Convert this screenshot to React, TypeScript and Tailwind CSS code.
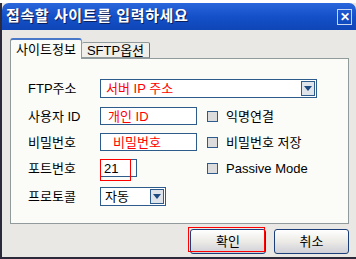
import React from 'react';

const font = { fontFamily: '"Liberation Sans", "Noto Sans CJK KR", sans-serif' };

function DropButton() {
  return (
    <div className="flex h-[15px] w-[14px] items-center justify-center border border-[#2d5c8c] bg-[#dfe3ea]">
      <svg width="8" height="6" viewBox="0 0 8 6">
        <path d="M0 0 H8 L4 5 Z" fill="#1d4a80" />
      </svg>
    </div>
  );
}

function Check({ label }: { label: string }) {
  return (
    <div className="flex items-center gap-[8px]">
      <div className="h-[11px] w-[11px] border border-[#2d5c8c] bg-[#dcdcdc]" />
      <span className="text-[13px] leading-none text-black">{label}</span>
    </div>
  );
}

function Row({ label, children, className }: { label: string; children: React.ReactNode; className: string }) {
  return (
    <div className={`flex items-center ${className}`}>
      <span className="w-[72px] text-[13px] leading-none text-black">{label}</span>
      {children}
    </div>
  );
}

export default function App() {
  return (
    <div className="h-[259px] w-[356px] overflow-hidden bg-white pt-[3px]" style={font}>
      <div className="flex h-[256px] flex-col border-b-2 border-l-2 border-[#2a2a3a] bg-[#e9e8e4]">
        {/* Title bar */}
        <div className="flex h-[27px] items-center justify-between rounded-t-[7px] bg-gradient-to-b from-[#2a66dc] via-[#1450c8] to-[#0f46b8] pl-[4px] pr-[4px]">
          <span className="text-[15px] font-bold tracking-[0.6px] text-white [text-shadow:1px_1px_0_#0a1f5c]">
            접속할 사이트를 입력하세요
          </span>
          <div className="flex h-[16px] w-[15px] items-center justify-center border border-[#c9d6f0] text-[12px] font-bold leading-none text-white">
            ✕
          </div>
        </div>

        <div className="flex flex-1 flex-col pl-[8px] pr-[7px] pt-[8px]">
          {/* Tabs */}
          <div className="flex h-[20px] items-end">
            <div className="z-10 -mb-px flex h-[21px] w-[72px] items-center justify-center rounded-t-[3px] border border-b-0 border-t-2 border-[#919b9c] border-t-[#4a78c8] bg-[#fbfbf8] text-[13px] leading-none text-black">
              사이트정보
            </div>
            <div className="flex h-[16px] w-[68px] items-center justify-center rounded-t-[2px] border border-l-0 border-[#919b9c] border-r-[#6a6a9a] bg-[#f0efe9] text-[13px] leading-none text-black">
              SFTP옵션
            </div>
          </div>

          {/* Panel */}
          <div className="flex h-[166px] flex-col border border-[#919b9c] bg-[#fbfbf8] pl-[17px]">
            <Row label="FTP주소" className="mt-[20px] h-[19px]">
              <div className="flex h-[19px] w-[217px] items-center justify-between border border-[#2d5c8c] bg-white pl-[5px] pr-[1px]">
                <span className="text-[13px] leading-none text-[#ff0000]">서버 IP 주소</span>
                <DropButton />
              </div>
            </Row>
            <Row label="사용자 ID" className="mt-[9px] h-[18px]">
              <div className="flex h-[18px] w-[97px] items-center border border-[#2d5c8c] bg-white pl-[7px]">
                <span className="text-[13px] leading-none text-[#ff0000]">개인 ID</span>
              </div>
              <div className="ml-[10px]">
                <Check label="익명연결" />
              </div>
            </Row>
            <Row label="비밀번호" className="mt-[8px] h-[18px]">
              <div className="flex h-[18px] w-[97px] items-center border border-[#2d5c8c] bg-white pl-[12px]">
                <span className="text-[13px] leading-none text-[#ff0000]">비밀번호</span>
              </div>
              <div className="ml-[10px]">
                <Check label="비밀번호 저장" />
              </div>
            </Row>
            <Row label="포트번호" className="mt-[8px] h-[18px]">
              <div className="relative flex h-[18px] w-[37px] items-center border border-[#2d5c8c] bg-white pl-[3px]">
                <span className="text-[13px] leading-none text-black">21</span>
                <div className="absolute -left-px -top-px h-[22px] w-[31px] border border-[#ff0000]" />
              </div>
              <div className="ml-[70px]">
                <Check label="Passive Mode" />
              </div>
            </Row>
            <Row label="프로토콜" className="mt-[10px] h-[19px]">
              <div className="flex h-[19px] w-[66px] items-center justify-between border border-[#2d5c8c] bg-white pl-[4px] pr-[1px]">
                <span className="text-[13px] leading-none text-black">자동</span>
                <DropButton />
              </div>
            </Row>
          </div>

          {/* Buttons */}
          <div className="mt-[5px] flex justify-end gap-[8px]">
            <div className="relative flex h-[25px] w-[76px] items-center justify-center rounded-[3px] border border-[#1c3f7a] bg-gradient-to-b from-[#ffffff] via-[#ecebe6] to-[#cfcfd8] text-[13px] leading-none text-black">
              확인
              <div className="absolute -left-[3px] -top-[3px] h-[25px] w-[77px] border border-[#ff0000]" />
            </div>
            <div className="flex h-[25px] w-[75px] items-center justify-center rounded-[3px] border border-[#1c3f7a] bg-gradient-to-b from-[#ffffff] via-[#ecebe6] to-[#cfcfd8] text-[13px] leading-none text-black">
              취소
            </div>
          </div>
        </div>
      </div>
    </div>
  );
}
